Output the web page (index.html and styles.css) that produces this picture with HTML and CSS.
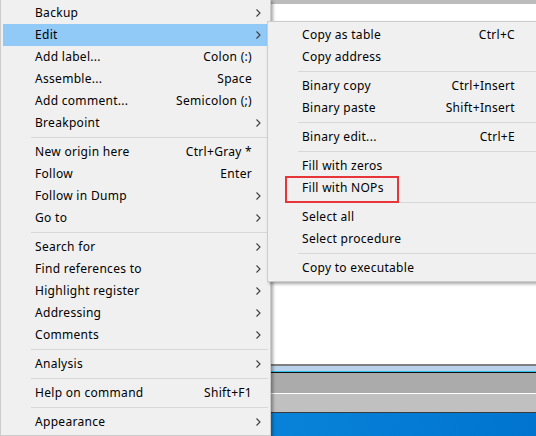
FILE: index.html
```html
<!DOCTYPE html>
<html>
<head>
<meta charset="utf-8">
<link rel="stylesheet" href="styles.css">
</head>
<body>
<div class="desk">
  <div class="topstrip"></div>
  <div class="panel"></div>
  <div class="s-line"></div>
  <div class="s-lblue"></div>
  <div class="s-cyan"></div>
  <div class="s-black"></div>
  <div class="s-grey1"></div>
  <div class="s-white"></div>
  <div class="s-grey2"></div>
  <div class="s-dark"></div>
  <div class="taskbar"></div>
</div>

<div class="menu main">
  <div class="item"><span class="label">Backup</span><span class="key"></span><span class="arr"><svg width="5" height="8" viewBox="0 0 5 8"><polyline points="0.5,0.5 4,4 0.5,7.5"/></svg></span></div>
  <div class="item hl"><span class="label">Edit</span><span class="key"></span><span class="arr"><svg width="5" height="8" viewBox="0 0 5 8"><polyline points="0.5,0.5 4,4 0.5,7.5"/></svg></span></div>
  <div class="item"><span class="label">Add label...</span><span class="key">Colon (:)</span><span class="arr"></span></div>
  <div class="item"><span class="label">Assemble...</span><span class="key">Space</span><span class="arr"></span></div>
  <div class="item"><span class="label">Add comment...</span><span class="key">Semicolon (;)</span><span class="arr"></span></div>
  <div class="item"><span class="label">Breakpoint</span><span class="key"></span><span class="arr"><svg width="5" height="8" viewBox="0 0 5 8"><polyline points="0.5,0.5 4,4 0.5,7.5"/></svg></span></div>
  <div class="sep"></div>
  <div class="item"><span class="label">New origin here</span><span class="key">Ctrl+Gray *</span><span class="arr"></span></div>
  <div class="item"><span class="label">Follow</span><span class="key">Enter</span><span class="arr"></span></div>
  <div class="item"><span class="label">Follow in Dump</span><span class="key"></span><span class="arr"><svg width="5" height="8" viewBox="0 0 5 8"><polyline points="0.5,0.5 4,4 0.5,7.5"/></svg></span></div>
  <div class="item"><span class="label">Go to</span><span class="key"></span><span class="arr"><svg width="5" height="8" viewBox="0 0 5 8"><polyline points="0.5,0.5 4,4 0.5,7.5"/></svg></span></div>
  <div class="sep"></div>
  <div class="item"><span class="label">Search for</span><span class="key"></span><span class="arr"><svg width="5" height="8" viewBox="0 0 5 8"><polyline points="0.5,0.5 4,4 0.5,7.5"/></svg></span></div>
  <div class="item"><span class="label">Find references to</span><span class="key"></span><span class="arr"><svg width="5" height="8" viewBox="0 0 5 8"><polyline points="0.5,0.5 4,4 0.5,7.5"/></svg></span></div>
  <div class="item"><span class="label">Highlight register</span><span class="key"></span><span class="arr"><svg width="5" height="8" viewBox="0 0 5 8"><polyline points="0.5,0.5 4,4 0.5,7.5"/></svg></span></div>
  <div class="item"><span class="label">Addressing</span><span class="key"></span><span class="arr"><svg width="5" height="8" viewBox="0 0 5 8"><polyline points="0.5,0.5 4,4 0.5,7.5"/></svg></span></div>
  <div class="item"><span class="label">Comments</span><span class="key"></span><span class="arr"><svg width="5" height="8" viewBox="0 0 5 8"><polyline points="0.5,0.5 4,4 0.5,7.5"/></svg></span></div>
  <div class="sep"></div>
  <div class="item"><span class="label">Analysis</span><span class="key"></span><span class="arr"><svg width="5" height="8" viewBox="0 0 5 8"><polyline points="0.5,0.5 4,4 0.5,7.5"/></svg></span></div>
  <div class="sep"></div>
  <div class="item"><span class="label">Help on command</span><span class="key">Shift+F1</span><span class="arr"></span></div>
  <div class="sep"></div>
  <div class="item"><span class="label">Appearance</span><span class="key"></span><span class="arr"><svg width="5" height="8" viewBox="0 0 5 8"><polyline points="0.5,0.5 4,4 0.5,7.5"/></svg></span></div>
</div>

<div class="menu sub">
  <div class="item"><span class="label">Copy as table</span><span class="key">Ctrl+C</span><span class="arr"></span></div>
  <div class="item"><span class="label">Copy address</span><span class="key"></span><span class="arr"></span></div>
  <div class="sep"></div>
  <div class="item"><span class="label">Binary copy</span><span class="key">Ctrl+Insert</span><span class="arr"></span></div>
  <div class="item"><span class="label">Binary paste</span><span class="key">Shift+Insert</span><span class="arr"></span></div>
  <div class="sep"></div>
  <div class="item"><span class="label">Binary edit...</span><span class="key">Ctrl+E</span><span class="arr"></span></div>
  <div class="sep"></div>
  <div class="item"><span class="label">Fill with zeros</span><span class="key"></span><span class="arr"></span></div>
  <div class="item"><span class="label">Fill with NOPs</span><span class="key"></span><span class="arr"></span></div>
  <div class="sep"></div>
  <div class="item"><span class="label">Select all</span><span class="key"></span><span class="arr"></span></div>
  <div class="item"><span class="label">Select procedure</span><span class="key"></span><span class="arr"></span></div>
  <div class="sep"></div>
  <div class="item"><span class="label">Copy to executable</span><span class="key"></span><span class="arr"></span></div>
</div>

<div class="mark"></div>
</body>
</html>
```

FILE: styles.css
```css
html, body {
  margin: 0;
  padding: 0;
}
body {
  width: 536px;
  height: 436px;
  overflow: hidden;
  position: relative;
  font-family: "Noto Sans", "Noto Sans CJK SC", sans-serif;
  font-size: 12px;
  letter-spacing: 0.3px;
  color: #000;
}

.desk {
  display: flex;
  flex-direction: column;
  height: 436px;
}
.topstrip { height: 4px; background: #bcbcbc; }
.panel { flex: 1; background: #ffffff; }
.s-line { height: 2px; background: #7e7e7e; }
.s-lblue { height: 5px; background: #b9d1ea; }
.s-cyan { height: 1px; background: #2ec3ec; }
.s-black { height: 1px; background: #111; }
.s-grey1 { height: 20px; background: #ababab; }
.s-white { height: 1px; background: #ffffff; }
.s-grey2 { height: 18px; background: #c0c0c0; }
.s-dark { height: 1px; background: #3a3a3a; }
.taskbar {
  height: 23px;
  background: linear-gradient(100deg, #139ae6 0%, #0a86dc 40%, #0074cf 100%);
}

.menu {
  position: absolute;
  background: #f0f0f0;
  border: 1px solid #cccccc;
  padding: 2px;
  box-shadow: 2px 2px 3px rgba(0, 0, 0, 0.35);
  display: flex;
  flex-direction: column;
}
.menu.main {
  left: 0;
  top: -1px;
  width: 265px;
}
.menu.sub {
  left: 267px;
  top: 21px;
  width: 266px;
}

.item {
  box-sizing: border-box;
  height: 22px;
  padding-bottom: 1px;
  display: grid;
  grid-template-columns: 1fr auto 16px;
  align-items: center;
  padding-left: 32px;
  white-space: nowrap;
}
.menu.sub .item {
  grid-template-columns: 1fr auto 21px;
}
.item.hl {
  background: #91c9f7;
}
.arr {
  display: flex;
  align-items: center;
  padding-left: 4px;
}
.arr svg polyline {
  fill: none;
  stroke: #3c3c3c;
  stroke-width: 1.1;
}

.sep {
  height: 7px;
  display: flex;
  align-items: center;
  padding-left: 28px;
}
.sep::after {
  content: "";
  display: block;
  flex: 1;
  height: 1px;
  background: #d7d7d7;
}

.mark {
  position: absolute;
  left: 285px;
  top: 176px;
  width: 110px;
  height: 23px;
  border: 2px solid #e8353a;
}
```
